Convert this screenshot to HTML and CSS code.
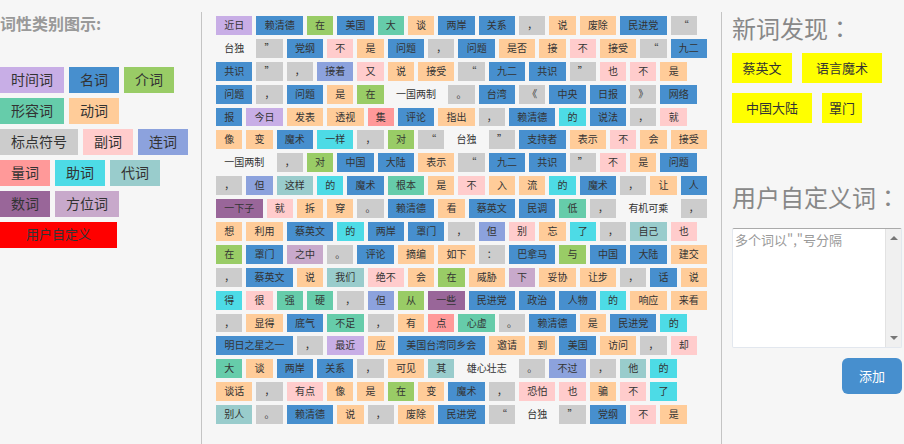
FILE: index.html
```html
<!DOCTYPE html>
<html lang="zh-CN">
<head>
<meta charset="utf-8">
<title>词性标注</title>
<link rel="stylesheet" href="styles.css">
</head>
<body>
<div class="page">
<aside class="legend">
<h2 class="legend-title">词性类别图示:</h2>
<ul class="legend-list">
<li class="t">时间词</li>
<li class="n">名词</li>
<li class="p">介词</li>
<li class="a">形容词</li>
<li class="v">动词</li>
<li class="x">标点符号</li>
<li class="d">副词</li>
<li class="c">连词</li>
<li class="q">量词</li>
<li class="u">助词</li>
<li class="r">代词</li>
<li class="m">数词</li>
<li class="f">方位词</li>
<li class="custom">用户自定义</li>
</ul>
</aside>
<main class="result">
<div class="words">
<span class="t l2">近日</span><span class="n l3">赖清德</span><span class="p">在</span><span class="n l2">美国</span><span class="a">大</span><span class="v">谈</span><span class="n l2">两岸</span><span class="n l2">关系</span><span class="x">，</span><span class="v">说</span><span class="v l2">废除</span><span class="n l3">民进党</span><span class="x">“</span>
<span class="l2">台独</span><span class="x">”</span><span class="n l2">党纲</span><span class="d">不</span><span class="v">是</span><span class="n l2">问题</span><span class="x">，</span><span class="n l2">问题</span><span class="v l2">是否</span><span class="v">接</span><span class="d">不</span><span class="v l2">接受</span><span class="x">“</span><span class="n l2">九二</span>
<span class="n l2">共识</span><span class="x">”</span><span class="x">，</span><span class="c l2">接着</span><span class="d">又</span><span class="v">说</span><span class="v l2">接受</span><span class="x">“</span><span class="n l2">九二</span><span class="n l2">共识</span><span class="x">”</span><span class="d">也</span><span class="d">不</span><span class="v">是</span>
<span class="n l2">问题</span><span class="x">，</span><span class="n l2">问题</span><span class="v">是</span><span class="p">在</span><span class="l4">一国两制</span><span class="x">。</span><span class="n l2">台湾</span><span class="x">《</span><span class="n l2">中央</span><span class="n l2">日报</span><span class="x">》</span><span class="n l2">网络</span>
<span class="n">报</span><span class="t l2">今日</span><span class="v l2">发表</span><span class="v l2">透视</span><span class="q">集</span><span class="n l2">评论</span><span class="v l2">指出</span><span class="x">，</span><span class="n l3">赖清德</span><span class="u">的</span><span class="n l2">说法</span><span class="x">，</span><span class="d">就</span>
<span class="v">像</span><span class="v">变</span><span class="n l2">魔术</span><span class="u l2">一样</span><span class="x">，</span><span class="p">对</span><span class="x">“</span><span class="l2">台独</span><span class="x">”</span><span class="n l3">支持者</span><span class="v l2">表示</span><span class="d">不</span><span class="v">会</span><span class="v l2">接受</span>
<span class="l4">一国两制</span><span class="x">，</span><span class="p">对</span><span class="n l2">中国</span><span class="n l2">大陆</span><span class="v l2">表示</span><span class="x">“</span><span class="n l2">九二</span><span class="n l2">共识</span><span class="x">”</span><span class="d">不</span><span class="v">是</span><span class="n l2">问题</span>
<span class="x">，</span><span class="c">但</span><span class="r l2">这样</span><span class="u">的</span><span class="n l2">魔术</span><span class="a l2">根本</span><span class="v">是</span><span class="d">不</span><span class="v">入</span><span class="v">流</span><span class="u">的</span><span class="n l2">魔术</span><span class="x">，</span><span class="v">让</span><span class="n">人</span>
<span class="m l3">一下子</span><span class="d">就</span><span class="v">拆</span><span class="v">穿</span><span class="x">。</span><span class="n l3">赖清德</span><span class="v">看</span><span class="n l3">蔡英文</span><span class="n l2">民调</span><span class="a">低</span><span class="x">，</span><span class="l4">有机可乘</span><span class="x">，</span>
<span class="v">想</span><span class="v l2">利用</span><span class="n l3">蔡英文</span><span class="u">的</span><span class="n l2">两岸</span><span class="n l2">罩门</span><span class="x">，</span><span class="c">但</span><span class="d">别</span><span class="v">忘</span><span class="u">了</span><span class="x">，</span><span class="r l2">自己</span><span class="d">也</span>
<span class="p">在</span><span class="n l2">罩门</span><span class="f l2">之中</span><span class="x">。</span><span class="n l2">评论</span><span class="v l2">摘编</span><span class="v l2">如下</span><span class="x">：</span><span class="n l3">巴拿马</span><span class="p">与</span><span class="n l2">中国</span><span class="n l2">大陆</span><span class="v l2">建交</span>
<span class="x">，</span><span class="n l3">蔡英文</span><span class="v">说</span><span class="r l2">我们</span><span class="d l2">绝不</span><span class="v">会</span><span class="p">在</span><span class="v l2">威胁</span><span class="f">下</span><span class="v l2">妥协</span><span class="v l2">让步</span><span class="x">，</span><span class="n">话</span><span class="v">说</span>
<span class="u">得</span><span class="d">很</span><span class="a">强</span><span class="a">硬</span><span class="x">，</span><span class="c">但</span><span class="p">从</span><span class="m l2">一些</span><span class="n l3">民进党</span><span class="n l2">政治</span><span class="n l2">人物</span><span class="u">的</span><span class="v l2">响应</span><span class="v l2">来看</span>
<span class="x">，</span><span class="v l2">显得</span><span class="n l2">底气</span><span class="a l2">不足</span><span class="x">，</span><span class="v">有</span><span class="q">点</span><span class="a l2">心虚</span><span class="x">。</span><span class="n l3">赖清德</span><span class="v">是</span><span class="n l3">民进党</span><span class="u">的</span>
<span class="n l6">明日之星之一</span><span class="x">，</span><span class="t l2">最近</span><span class="v">应</span><span class="n l7">美国台湾同乡会</span><span class="v l2">邀请</span><span class="v">到</span><span class="n l2">美国</span><span class="v l2">访问</span><span class="x">，</span><span class="d">却</span>
<span class="a">大</span><span class="v">谈</span><span class="n l2">两岸</span><span class="n l2">关系</span><span class="x">，</span><span class="v l2">可见</span><span class="r">其</span><span class="l4">雄心壮志</span><span class="x">。</span><span class="c l2">不过</span><span class="x">，</span><span class="r">他</span><span class="u">的</span>
<span class="v l2">谈话</span><span class="x">，</span><span class="d l2">有点</span><span class="v">像</span><span class="v">是</span><span class="p">在</span><span class="v">变</span><span class="n l2">魔术</span><span class="x">，</span><span class="d l2">恐怕</span><span class="d">也</span><span class="v">骗</span><span class="d">不</span><span class="u">了</span>
<span class="r l2">别人</span><span class="x">。</span><span class="n l3">赖清德</span><span class="v">说</span><span class="x">，</span><span class="v l2">废除</span><span class="n l3">民进党</span><span class="x">“</span><span class="l2">台独</span><span class="x">”</span><span class="n l2">党纲</span><span class="d">不</span><span class="v">是</span>
</div>
</main>
<aside class="side">
<section class="found">
<h2 class="side-title">新词发现：</h2>
<ul class="found-list">
<li class="f3">蔡英文</li>
<li class="f4">语言魔术</li>
<li class="f4">中国大陆</li>
<li class="f2">罩门</li>
</ul>
</section>
<form class="custom-form">
<label class="side-title" for="custom-words">用户自定义词：</label>
<div class="field">
<textarea id="custom-words" placeholder='多个词以","号分隔'></textarea>
<div class="scroll" aria-hidden="true">
<svg width="8" height="4"><path d="M0 4 4 0 8 4z"/></svg>
<svg width="8" height="4"><path d="M0 0 4 4 8 0z"/></svg>
</div>
</div>
<button type="button">添加</button>
</form>
</aside>
</div>
</body>
</html>
```
FILE: styles.css
```css
* {
  box-sizing: border-box;
}

body {
  margin: 0;
  background: #f6f6f6;
  color: #333;
  font-family: "Noto Sans CJK SC", sans-serif;
}

ul {
  margin: 0;
  padding: 0;
  list-style: none;
}

.page {
  display: grid;
  grid-template-columns: 201px 1fr 182px;
  min-height: 100vh;
  padding-top: 12px;
}

/* Legend */
.legend-title {
  margin: 0 0 33px;
  color: #999;
  font-size: 16px;
  line-height: 22px;
}

.legend-list {
  display: flex;
  flex-wrap: wrap;
  gap: 5px;
  font-size: 14px;
  line-height: 24px;
}

.legend-list li {
  padding: 0 11px 2px;
}

.legend-list .custom {
  padding: 0 26px 2px;
  background: #f00;
  font-size: 13px;
}

/* Tagged text: a word of n characters spans n + 2 columns */
.result {
  display: grid;
  padding: 4px 14px 20px;
  border: solid #c4c4c4;
  border-width: 0 1px;
}

.words {
  display: grid;
  grid-template-columns: repeat(49, 1fr);
  grid-auto-rows: 1fr;
  gap: 4px;
  font-size: 10px;
  line-height: 18px;
}

.words span {
  grid-column: span 3;
  text-align: center;
  white-space: nowrap;
}

.words .l2 { grid-column: span 4; }
.words .l3 { grid-column: span 5; }
.words .l4 { grid-column: span 6; }
.words .l6 { grid-column: span 8; }
.words .l7 { grid-column: span 9; }

/* Parts of speech */
.t { background: #c8aee6; }
.n { background: #478fce; }
.p { background: #9c6; }
.a { background: #66ccaa; }
.v { background: #fc9; }
.x { background: #ccc; }
.d { background: #fcc; }
.c { background: #8ca2dd; }
.q { background: #f99; }
.u { background: #4ddbe6; }
.r { background: #9cc; }
.m { background: #969; }
.f { background: #c8a9cb; }

/* Right column */
.side {
  padding: 0 2px 0 10px;
}

/* The TC face without locl keeps the full-width colon centred */
.side-title {
  display: block;
  margin: 0;
  color: #888;
  font-family: "Noto Sans CJK TC", sans-serif;
  font-feature-settings: "locl" 0;
  font-size: 24px;
  font-weight: 400;
  line-height: 32px;
  white-space: nowrap;
}

.found-list {
  display: flex;
  flex-wrap: wrap;
  gap: 10px;
  margin: 9px 0 58px;
  font-size: 13px;
  line-height: 30px;
  text-align: center;
}

.found-list li {
  background: #ff0;
}

.f2 { width: 40px; }
.f3 { width: 60px; }
.f4 { width: 80px; }

.custom-form {
  display: flex;
  flex-direction: column;
  align-items: flex-end;
}

.custom-form .side-title {
  align-self: flex-start;
}

.field {
  display: flex;
  width: 100%;
  height: 120px;
  margin: 15px 0 10px;
  border: 1px solid #e2e7ee;
  border-top-color: #aaa;
  border-radius: 2px;
  background: #fff;
}

textarea {
  flex: 1;
  min-width: 0;
  padding: 2px;
  border: 0;
  background: none;
  color: #333;
  font: 13px/18px "Noto Sans CJK SC", sans-serif;
  resize: none;
  scrollbar-width: none;
}

textarea::placeholder {
  color: #999;
}

.scroll {
  display: flex;
  flex-direction: column;
  align-items: center;
  justify-content: space-between;
  width: 16px;
  padding: 7px 0;
  border-left: 1px solid #e2e2e2;
  background: #f0f0f0;
}

.scroll svg {
  fill: #777;
}

button {
  padding: 0 17px;
  border: 0;
  border-radius: 6px;
  background: #478fce;
  color: #fff;
  font: 13px/36px "Noto Sans CJK SC", sans-serif;
}
```
